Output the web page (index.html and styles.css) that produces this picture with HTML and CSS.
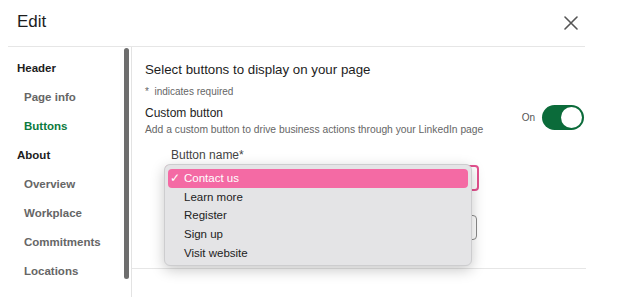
FILE: index.html
```html
<!DOCTYPE html>
<html lang="en">
<head>
    <meta charset="UTF-8">
    <title>Edit page buttons</title>
    <link rel="stylesheet" href="styles.css">
</head>
<body>
    <div class="dialog">
        <div class="dialog-header">
            <h1>Edit</h1>
            <button class="close-btn" aria-label="Close">
                <svg width="14" height="14" viewBox="0 0 14 14">
                    <path d="M1 1 L13 13 M13 1 L1 13" stroke="#555" stroke-width="1.6" stroke-linecap="round"/>
                </svg>
            </button>
        </div>
        <div class="divider"></div>

        <div class="dialog-body">
            <nav class="sidebar">
                <div class="nav-group">Header</div>
                <div class="nav-item">Page info</div>
                <div class="nav-item active">Buttons</div>
                <div class="nav-group">About</div>
                <div class="nav-item">Overview</div>
                <div class="nav-item">Workplace</div>
                <div class="nav-item">Commitments</div>
                <div class="nav-item">Locations</div>
            </nav>
            <div class="scrollbar"><div class="thumb"></div></div>

            <main class="content">
                <h2>Select buttons to display on your page</h2>
                <p class="required">*&nbsp; indicates required</p>

                <div class="setting-row">
                    <div>
                        <div class="setting-title">Custom button</div>
                        <div class="setting-desc">Add a custom button to drive business actions through your LinkedIn page</div>
                    </div>
                    <div class="toggle-wrap">
                        <span class="toggle-label">On</span>
                        <span class="toggle"><span class="knob"></span></span>
                    </div>
                </div>

                <div class="field">
                    <label class="field-label">Button name*</label>
                    <div class="select-box focused"></div>
                    <div class="select-box second"></div>

                    <!-- native select popup, open -->
                    <ul class="dropdown">
                        <li class="selected"><span class="check">✓</span>Contact us</li>
                        <li><span class="check"></span>Learn more</li>
                        <li><span class="check"></span>Register</li>
                        <li><span class="check"></span>Sign up</li>
                        <li><span class="check"></span>Visit website</li>
                    </ul>
                </div>
                <div class="content-footer"></div>
            </main>
        </div>
    </div>
</body>
</html>
```

FILE: styles.css
```css
/* General styling */
body {
    margin: 0;
    padding: 0;
    background: #ffffff;
    font-family: "Liberation Sans", Arial, sans-serif;
    color: #1f1f1f;
}

.dialog {
    width: 628px;
    height: 297px;
    overflow: hidden;
}

.dialog-header {
    height: 46px;
    display: flex;
    align-items: center;
    justify-content: space-between;
    padding: 0 50px 0 17px;
}

.dialog-header h1 {
    margin: 0;
    font-size: 17px;
    font-weight: normal;
    color: #1d1d1d;
    margin-top: -2px;
}

.close-btn {
    border: none;
    background: none;
    padding: 0;
    width: 14px;
    height: 14px;
    display: flex;
}

.divider {
    margin-left: 8px;
    width: 577px;
    height: 1px;
    background: #e6e6e6;
}

.dialog-body {
    display: flex;
    height: 250px;
    padding-left: 8px;
}

/* Sidebar */
.sidebar {
    width: 107px;
    padding: 7px 0 0 9px;
}

.nav-group,
.nav-item {
    height: 29px;
    line-height: 29px;
    font-size: 11.5px;
    font-weight: bold;
    white-space: nowrap;
}

.nav-group {
    color: #1d1d1d;
}

.nav-item {
    padding-left: 7px;
    color: #666666;
}

.nav-item.active {
    color: #0b7a3e;
}

.scrollbar {
    width: 7px;
    padding-top: 1px;
}

.scrollbar .thumb {
    width: 5px;
    height: 231px;
    border-radius: 3px;
    background: #6e6e6e;
}

/* Main content */
.content {
    width: 439px;
    border-left: 1px solid #e3e3e3;
    padding: 14px 2px 0 13px;
}

.content h2 {
    margin: 0;
    font-size: 13.3px;
    line-height: 18px;
    font-weight: normal;
    color: #1d1d1d;
}

.required {
    margin: 6px 0 0 0;
    font-size: 10px;
    line-height: 14px;
    color: #666666;
}

.setting-row {
    margin-top: 6px;
    display: flex;
    justify-content: space-between;
    align-items: flex-start;
}

.setting-title {
    font-size: 12px;
    line-height: 16px;
    color: #1d1d1d;
}

.setting-desc {
    margin-top: 2px;
    font-size: 10.3px;
    line-height: 14px;
    color: #666666;
    white-space: nowrap;
}

.toggle-wrap {
    display: flex;
    align-items: center;
    gap: 7px;
}

.toggle-label {
    font-size: 10px;
    color: #555555;
}

.toggle {
    width: 42px;
    height: 25px;
    border-radius: 13px;
    background: #0b6b3a;
    display: flex;
    align-items: center;
    justify-content: flex-end;
    padding: 0 2px;
    box-sizing: border-box;
}

.toggle .knob {
    width: 21px;
    height: 21px;
    border-radius: 50%;
    background: #ffffff;
}

.field {
    position: relative;
    margin-top: 10px;
    padding-left: 20px;
    height: 121px;
}

.field-label {
    display: block;
    padding-left: 6px;
    font-size: 12px;
    line-height: 16px;
    color: #444444;
}

.select-box {
    width: 310px;
    height: 23px;
    border-radius: 4px;
    border: 1px solid #8a8a8a;
}

.select-box.focused {
    margin-top: 2px;
    border: 2px solid #e4518f;
    height: 22px;
}

.select-box.second {
    margin-top: 24px;
}

.dropdown {
    position: absolute;
    left: 19px;
    top: 17px;
    width: 300px;
    margin: 0;
    padding: 4px 3px 3px;
    list-style: none;
    background: #e4e4e6;
    border: 1px solid #cdcdcf;
    border-radius: 6px;
    box-shadow: 0 4px 14px rgba(0, 0, 0, 0.22);
}

.dropdown li {
    height: 18.7px;
    line-height: 18.7px;
    font-size: 11.5px;
    color: #222222;
    display: flex;
    border-radius: 4px;
}

.dropdown li.selected {
    background: #f46aa4;
    color: #ffffff;
}

.dropdown .check {
    width: 14px;
    padding-left: 2px;
    font-size: 12px;
}

.content-footer {
    height: 1px;
    background: #e6e6e6;
    margin-left: -13px;
    margin-right: -2px;
}
```
